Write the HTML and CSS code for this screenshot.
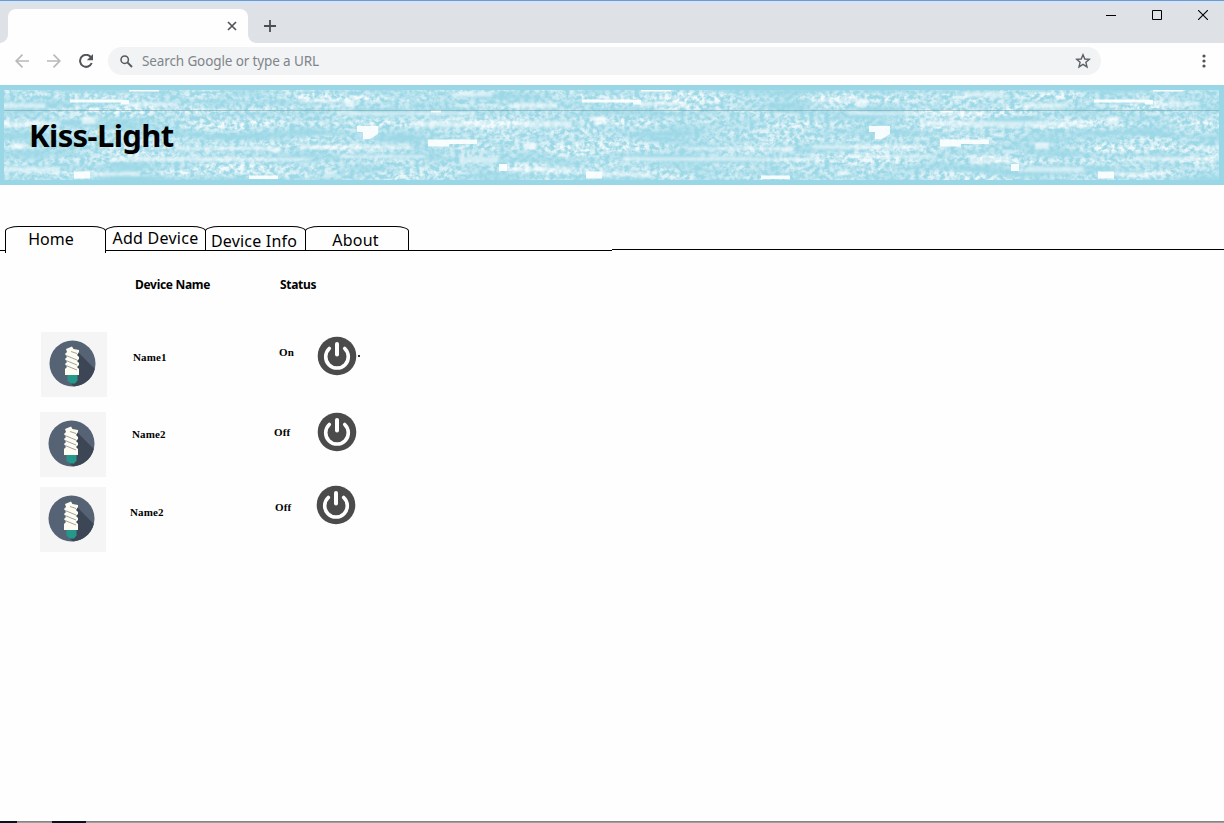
FILE: index.html
```html
<!DOCTYPE html>
<html lang="en">
<head>
<meta charset="utf-8">
<title>Kiss-Light</title>
<link rel="stylesheet" href="styles.css">
</head>
<body>
<svg class="defs" width="0" height="0" aria-hidden="true">
  <defs>
    <symbol id="bulb" viewBox="0 0 66 65">
      <rect width="66" height="65" fill="#f5f5f6"/>
      <circle cx="31.5" cy="31.500" r="23" fill="#566374"/>
      <path d="M37 20L53.800 37A23 23 0 0 1 33 54.400L28 50Z" fill="#3c4655"/>
      <path d="M26.500 42H36.500V48.500L34 51.500H29.500L26.500 48.500Z" fill="#26978b"/>
      <path d="M25 17L31 14.500L32.500 17L38 18V20L36 23L38 25V27L36 29L38 31V33L36 35L38 37V43H24V37L26 35L24 32L26 30L24 27L26 25L24 22L26 20Z" fill="#fffdf2"/>
      <path d="M30 19.500L36 21.500M25 23.500L36 28M25 28.500L36 33M25 33.500L36 38" fill="none" stroke="#9da3a8" stroke-width="1"/>
    </symbol>
    <symbol id="power" viewBox="0 0 40 40">
      <circle cx="20" cy="20" r="19.3" fill="#4b4b4b"/>
      <path d="M12.300 12.500A11.300 11.300 0 1 0 27.700 12.500" fill="none" stroke="#fff" stroke-width="3.600" stroke-linecap="round"/>
      <path d="M20 8V18.500" stroke="#fff" stroke-width="4" stroke-linecap="round"/>
    </symbol>
  </defs>
</svg>

<header class="tabstrip">
  <div class="browser-tab">
    <svg width="10" height="10" viewBox="0 0 10 10"><path d="M1 1L9 9M9 1L1 9" stroke="#505458" stroke-width="1.7"/></svg>
  </div>
  <svg class="new-tab" width="12" height="12" viewBox="0 0 12 12"><path d="M6 0V12M0 6H12" stroke="#4b4f53" stroke-width="1.8"/></svg>
  <div class="window-controls">
    <svg width="10" height="10" viewBox="0 0 10 10"><path d="M0 5.5H10" stroke="#000"/></svg>
    <svg width="10" height="10" viewBox="0 0 10 10"><path d="M.5 .5H9.5V9.5H.5Z" fill="none" stroke="#000"/></svg>
    <svg width="10" height="10" viewBox="0 0 10 10"><path d="M0 0L10 10M10 0L0 10" stroke="#000" stroke-width="1.1"/></svg>
  </div>
</header>

<nav class="toolbar">
  <svg width="14" height="14" viewBox="0 0 14 14"><path d="M14 7H1M7.5 .7L1.2 7L7.5 13.3" fill="none" stroke="#b7b9bb" stroke-width="1.7"/></svg>
  <svg width="14" height="14" viewBox="0 0 14 14"><path d="M0 7H13M6.5 .7L12.8 7L6.5 13.3" fill="none" stroke="#b7b9bb" stroke-width="1.7"/></svg>
  <svg width="14" height="14" viewBox="0 0 14 14"><path d="M11.7 3A6 6 0 1 0 12.7 9" fill="none" stroke="#505458" stroke-width="2"/><path d="M14 0V6.2H7.8Z" fill="#505458"/></svg>
  <div class="omnibox">
    <svg width="13" height="13" viewBox="0 0 13 13"><circle cx="4.7" cy="4.7" r="3.7" fill="none" stroke="#55595d" stroke-width="1.5"/><path d="M7.4 7.4L12 12" stroke="#55595d" stroke-width="1.9"/></svg>
    <span class="placeholder">Search Google or type a URL</span>
    <svg class="star" width="16" height="16" viewBox="0 0 16 16"><path d="M8 1.7L9.8 6L14.4 6.3L10.9 9.3L12 13.9L8 11.4L4 13.9L5.1 9.3L1.6 6.3L6.2 6Z" fill="none" stroke="#5c5f65" stroke-width="1.4"/></svg>
  </div>
  <svg class="menu" width="4" height="14" viewBox="0 0 4 14"><g fill="#505458"><circle cx="2" cy="2" r="1.6"/><circle cx="2" cy="7" r="1.6"/><circle cx="2" cy="12" r="1.6"/></g></svg>
</nav>

<section class="banner">
  <svg class="texture" width="1215" height="90" viewBox="4 90 1215 90" aria-hidden="true">
    <defs>
      <filter id="grain" x="0" y="0" width="100%" height="100%" color-interpolation-filters="sRGB">
        <feTurbulence type="fractalNoise" baseFrequency=".2 .24" numOctaves="3" seed="4" result="f"/>
        <feColorMatrix in="f" values="0 0 0 0 1  0 0 0 0 1  0 0 0 0 1  3 0 0 0 -1" result="fine"/>
        <feTurbulence type="fractalNoise" baseFrequency=".011 .085" numOctaves="2" seed="23" result="c"/>
        <feColorMatrix in="c" values="0 0 0 0 1  0 0 0 0 1  0 0 0 0 1  1.8 0 0 0 -.32" result="coarse"/>
        <feComposite in="fine" in2="coarse" operator="in"/>
      </filter>
      <filter id="soft" x="-5%" y="-20%" width="110%" height="140%"><feGaussianBlur stdDeviation="1"/></filter>
      <filter id="edge" x="-5%" y="-20%" width="110%" height="140%"><feGaussianBlur stdDeviation=".5"/></filter>
      <pattern id="streaks" x="0" y="0" width="512" height="200" patternUnits="userSpaceOnUse">
        <g fill="#fff" filter="url(#soft)">
          <g opacity=".5">
            <path d="M128 102H175V106H128ZM4 122H60V126H4ZM110 157H240V161H110ZM90 172H140V176H90ZM175 147H270V150H175ZM190 158H310V161H190ZM4 167H60V171H4ZM410 121H512V127H410ZM0 121H60V127H0ZM460 157H498V163H460ZM452 92H492V97H452ZM300 99H356V102H300ZM337 111H356V115H337ZM340 155H425V158H340ZM300 145H410V149H300ZM345 112H475V115H345ZM507 168H512V172H507ZM0 168H60V172H0ZM510 103H512V108H510ZM0 103H45V108H0Z"/>
          </g>
          <path opacity=".65" d="M82 117H95V124H82ZM345 101H354V107H345ZM325 171H335V175H325ZM11 143H25V149H11ZM269 147H281V152H269Z"/>
        </g>
        <path fill="#fff" opacity=".9" filter="url(#edge)" d="M70 99.500H122V100H129V104.500H121V102.500H70ZM129 90H159V91.500H129ZM74 171.500H90V178.500H74ZM249 175.500H278V179H249ZM357 126H378V134L370 139H363V132H357ZM428 139.500H477V144H449V146.500H428ZM431 110H441V112.500H431ZM499 164H507V171H499Z"/>
      </pattern>
    </defs>
    <rect x="4" y="90" width="1215" height="90" fill="#fff" opacity=".04"/>
    <rect x="4" y="90" width="1215" height="90" filter="url(#grain)" opacity=".85"/>
    <rect x="4" y="90" width="1215" height="90" fill="url(#streaks)"/>
    <path d="M4 110.500H1219" stroke="#78a5af" stroke-opacity=".6"/>
  </svg>
  <h1 class="title">Kiss-Light</h1>
</section>

<nav class="tabs">
  <a class="tab home">Home</a>
  <a class="tab add">Add Device</a>
  <a class="tab info">Device Info</a>
  <a class="tab about">About</a>
  <span class="rule"></span>
  <span class="rule-end"></span>
</nav>

<main class="devices">
  <div class="heads"><span class="name-head">Device Name</span><span>Status</span></div>
  <div class="device first">
    <svg class="bulb"><use href="#bulb"/></svg>
    <span class="name">Name1</span><span class="status">On</span>
    <svg class="power"><use href="#power"/></svg><i class="speck"></i>
  </div>
  <div class="device second">
    <svg class="bulb"><use href="#bulb"/></svg>
    <span class="name">Name2</span><span class="status">Off</span>
    <svg class="power"><use href="#power"/></svg>
  </div>
  <div class="device third">
    <svg class="bulb"><use href="#bulb"/></svg>
    <span class="name">Name2</span><span class="status">Off</span>
    <svg class="power"><use href="#power"/></svg>
  </div>
</main>
<footer class="edge"></footer>
</body>
</html>
```
FILE: styles.css
```css
* { box-sizing: border-box; }
body {
  margin: 0;
  height: 823px;
  display: flex;
  flex-direction: column;
  overflow: hidden;
  background: #fefefe;
  color: #000;
  font-family: "Noto Sans", "Open Sans", sans-serif;
}
svg { display: block; flex: none; }
.defs { position: absolute; }
.tabstrip {
  flex: none;
  height: 43px;
  display: flex;
  align-items: flex-start;
  background: #dee1e6;
  border-top: 1px solid #6f9bcb;
  box-shadow: inset 0 3px #d5e3f5;
}
.browser-tab {
  position: relative;
  width: 240px;
  height: 34px;
  margin: 8px 0 0 8px;
  padding: 12px 11px;
  display: flex;
  justify-content: flex-end;
  background: #fefefe;
  border-radius: 8px 8px 0 0;
}
.browser-tab::before, .browser-tab::after {
  content: "";
  position: absolute;
  bottom: 0;
  width: 8px;
  height: 8px;
}
.browser-tab::before { left: -8px; background: radial-gradient(circle at 0 0, transparent 7.5px, #fefefe 8px); }
.browser-tab::after { right: -8px; background: radial-gradient(circle at 100% 0, transparent 7.5px, #fefefe 8px); }
.new-tab { margin: 19px 0 0 16px; }
.window-controls { display: flex; gap: 36px; margin: 9px 16px 0 auto; }
.toolbar {
  flex: none;
  height: 42px;
  padding: 0 18px 6px 15px;
  display: flex;
  align-items: center;
  gap: 18px;
}
.omnibox {
  width: 993px;
  height: 28px;
  margin-left: -3px;
  padding: 0 10px 0 12px;
  display: flex;
  align-items: center;
  border-radius: 14px;
  background: #f1f3f4;
}
.placeholder {
  margin-left: 9px;
  color: #80858a;
  font-size: 13.5px;
  letter-spacing: -.12px;
}
.star { margin-left: auto; }
.menu { margin-left: auto; }
.banner {
  flex: none;
  display: grid;
  height: 100px;
  padding: 5px 5px 5px 4px;
  background: #9ad7e6;
}
.texture, .title { grid-area: 1 / 1; }
.title {
  z-index: 1;
  margin: 23px 0 0 25px;
  font: 700 31px/44px "Noto Sans", sans-serif;
  letter-spacing: -.6px;
}
.tabs {
  flex: none;
  display: flex;
  align-items: flex-start;
  height: 28px;
  margin-top: 41px;
  background: linear-gradient(#000, #000) 0 24px / 5px 1px no-repeat;
}
.tab {
  height: 25px;
  border: 1px solid #000;
  border-radius: 14px 14px 0 0 / 5px 5px 0 0;
  font-size: 16px;
  line-height: 24px;
  text-align: center;
  white-space: nowrap;
}
.home { width: 101px; height: 27px; margin-left: 5px; padding-right: 9px; border-bottom: 0; }
.add { width: 101px; margin-left: -1px; line-height: 23px; letter-spacing: .25px; }
.info { width: 101px; line-height: 28px; margin-left: -1px; padding-right: 3px; letter-spacing: .2px; }
.about { width: 104px; line-height: 26px; margin-left: -1px; padding-right: 3px; letter-spacing: .2px; }
.rule { width: 203px; height: 1px; margin-top: 24px; background: #000; }
.rule-end { flex: 1; height: 1px; margin-top: 23px; background: #000; }
.devices { flex: 1; }
.heads {
  display: flex;
  height: 22px;
  margin: 20px 0 0 135px;
  font: 700 12px/22px "Noto Sans", sans-serif;
  letter-spacing: -.3px;
}
.name-head { width: 145px; }
.device {
  display: flex;
  align-items: flex-start;
  height: 65px;
  font: 700 11px/14px "Liberation Serif", serif;
  letter-spacing: .15px;
}
.bulb { width: 66px; height: 65px; }
.power { width: 40px; height: 40px; }
.first { margin: 36px 0 0 41px; }
.first .name { width: 146px; margin: 18px 0 0 26px; }
.first .status { width: 38px; margin-top: 13px; }
.first .power { margin-top: 4px; }
.speck { width: 2px; height: 2px; margin: 23px 0 0 1px; background: #333; }
.second { margin: 15px 0 0 40px; }
.second .name { width: 142px; margin: 15px 0 0 26px; }
.second .status { width: 43px; margin-top: 13px; }
.third { margin: 10px 0 0 40px; }
.third .name { width: 145px; margin: 18px 0 0 24px; }
.third .status { width: 41px; margin-top: 13px; }
.third .power { margin-top: -2px; }
.edge {
  flex: none;
  height: 2px;
  background: linear-gradient(90deg, #07121f 17px, transparent 17px 52px, #07121f 52px 86px, transparent 86px), linear-gradient(#777, #aaa);
}
```
